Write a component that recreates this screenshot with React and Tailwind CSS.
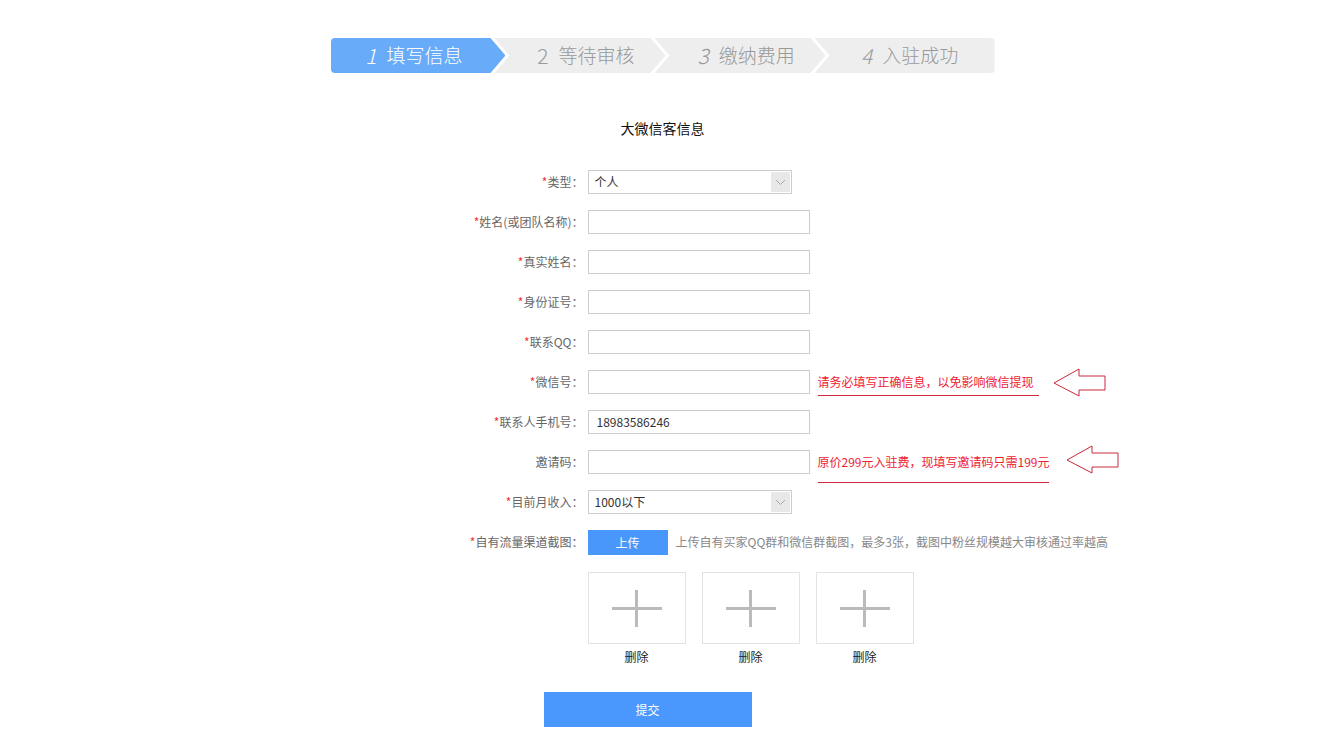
const steps = [
  { num: '1', text: '填写信息', italic: true },
  { num: '2', text: '等待审核', italic: false },
  { num: '3', text: '缴纳费用', italic: true },
  { num: '4', text: '入驻成功', italic: true },
]

function StepBar() {
  return (
    <div className="flex w-[664px] h-[35px] mx-auto">
      {steps.map((s, i) => {
        const first = i === 0
        const last = i === steps.length - 1
        let shape = '[clip-path:polygon(0_0,calc(100%-15px)_0,100%_50%,calc(100%-15px)_100%,0_100%,15px_50%)]'
        if (first) shape = '[clip-path:polygon(0_0,calc(100%-15px)_0,100%_50%,calc(100%-15px)_100%,0_100%)] rounded-l-[4px]'
        if (last) shape = '[clip-path:polygon(0_0,100%_0,100%_100%,0_100%,15px_50%)] rounded-r-[4px]'
        return (
          <div
            key={s.num}
            className={`h-full flex items-center justify-center ${first ? '' : '-ml-[11px]'} ${
              last ? 'w-[181px] pl-[10px]' : first ? 'w-[176px] pr-[8px]' : 'w-[172px] pl-[12px]'
            } ${first ? 'bg-[#68abf9] text-white' : 'bg-[#eeeeee] text-[#999]'} ${shape}`}
          >
            <span className={`text-[21px] mr-[10px] ${s.italic ? 'italic' : ''} font-light`}>{s.num}</span>
            <span className="text-[19px] font-light">{s.text}</span>
          </div>
        )
      })}
    </div>
  )
}

function Label({ text, required = true }) {
  return (
    <div className="w-[253px] shrink-0 text-right text-[12px] text-[#666] leading-6">
      {required && <span className="text-[#e33]">*</span>}
      {text}：
    </div>
  )
}

function TextInput({ value = '' }) {
  return (
    <div className="w-[222px] h-6 shrink-0 border border-[#ccc] bg-white px-[8px] text-[12px] leading-[22px] text-[#333]">
      {value}
    </div>
  )
}

function SelectBox({ value }) {
  return (
    <div className="w-[204px] h-6 shrink-0 border border-[#ccc] bg-white flex items-center justify-between">
      <span className="pl-[6px] text-[12px] text-[#333]">{value}</span>
      <span className="w-[19px] h-[20px] mr-[1px] bg-[#e8e8e8] flex items-center justify-center">
        <svg width="11" height="7" viewBox="0 0 11 7" fill="none">
          <path d="M1 1l4.5 4.5L10 1" stroke="#aaa" strokeWidth="1" />
        </svg>
      </span>
    </div>
  )
}

function LeftArrow({ className }) {
  return (
    <svg width="54" height="29" viewBox="0 0 54 29" fill="none" className={className}>
      <path d="M2 15L27 1V8H53V22H27V28Z" stroke="#c8283c" strokeWidth="1" fill="white" />
    </svg>
  )
}

function Row({ children }) {
  return <div className="flex items-start gap-[4px] h-6 mb-4">{children}</div>
}

function ImageSlot() {
  return (
    <div className="flex flex-col items-center">
      <div className="w-[98px] h-[72px] border border-[#e3e3e3] flex items-center justify-center relative">
        <div className="absolute w-[50px] h-[3px] bg-[#bbb]" />
        <div className="absolute w-[3px] h-[37px] bg-[#bbb]" />
      </div>
      <span className="mt-[3px] text-[12px] text-[#222] leading-5">删除</span>
    </div>
  )
}

function App() {
  return (
    <div className="min-h-screen bg-white pt-[38px] font-['Noto_Sans_CJK_SC','Noto_Sans',sans-serif]">
      <StepBar />

      <h2 className="mt-[45px] text-center text-[14px] leading-5 text-[#111]">大微信客信息</h2>

      <div className="w-[664px] mx-auto mt-[32px]">
        <Row>
          <Label text="类型" />
          <SelectBox value="个人" />
        </Row>
        <Row>
          <Label text="姓名(或团队名称)" />
          <TextInput />
        </Row>
        <Row>
          <Label text="真实姓名" />
          <TextInput />
        </Row>
        <Row>
          <Label text="身份证号" />
          <TextInput />
        </Row>
        <Row>
          <Label text="联系QQ" />
          <TextInput />
        </Row>
        <Row>
          <Label text="微信号" />
          <TextInput />
          <span className="ml-[4px] mt-1 pb-[5px] pr-[5px] border-b border-[#d0283c] text-[12px] leading-4 text-[#e23] whitespace-nowrap">
            请务必填写正确信息，以免影响微信提现
          </span>
          <LeftArrow className="ml-[9px] -mt-[2px] shrink-0" />
        </Row>
        <Row>
          <Label text="联系人手机号" />
          <TextInput value="18983586246" />
        </Row>
        <Row>
          <Label text="邀请码" required={false} />
          <TextInput />
          <span className="ml-[4px] mt-1 pb-[12px] border-b border-[#d0283c] text-[12px] leading-4 text-[#e23] whitespace-nowrap">
            原价299元入驻费，现填写邀请码只需199元
          </span>
          <LeftArrow className="ml-[12px] -mt-[5px] shrink-0" />
        </Row>
        <Row>
          <Label text="目前月收入" />
          <SelectBox value="1000以下" />
        </Row>
        <div className="flex items-start gap-[4px] h-[25px]">
          <Label text="自有流量渠道截图" />
          <button className="w-[80px] h-[25px] shrink-0 bg-[#4a97fc] text-white text-[12px]">上传</button>
          <span className="ml-[4px] text-[12px] leading-6 text-[#888] whitespace-nowrap">
            上传自有买家QQ群和微信群截图，最多3张，截图中粉丝规模越大审核通过率越高
          </span>
        </div>

        <div className="flex gap-4 ml-[257px] mt-[17px]">
          <ImageSlot />
          <ImageSlot />
          <ImageSlot />
        </div>

        <button className="block ml-[213px] mt-[25px] w-[208px] h-[35px] bg-[#4a97fe] text-white text-[12px]">提交</button>
      </div>
    </div>
  )
}

export default App
